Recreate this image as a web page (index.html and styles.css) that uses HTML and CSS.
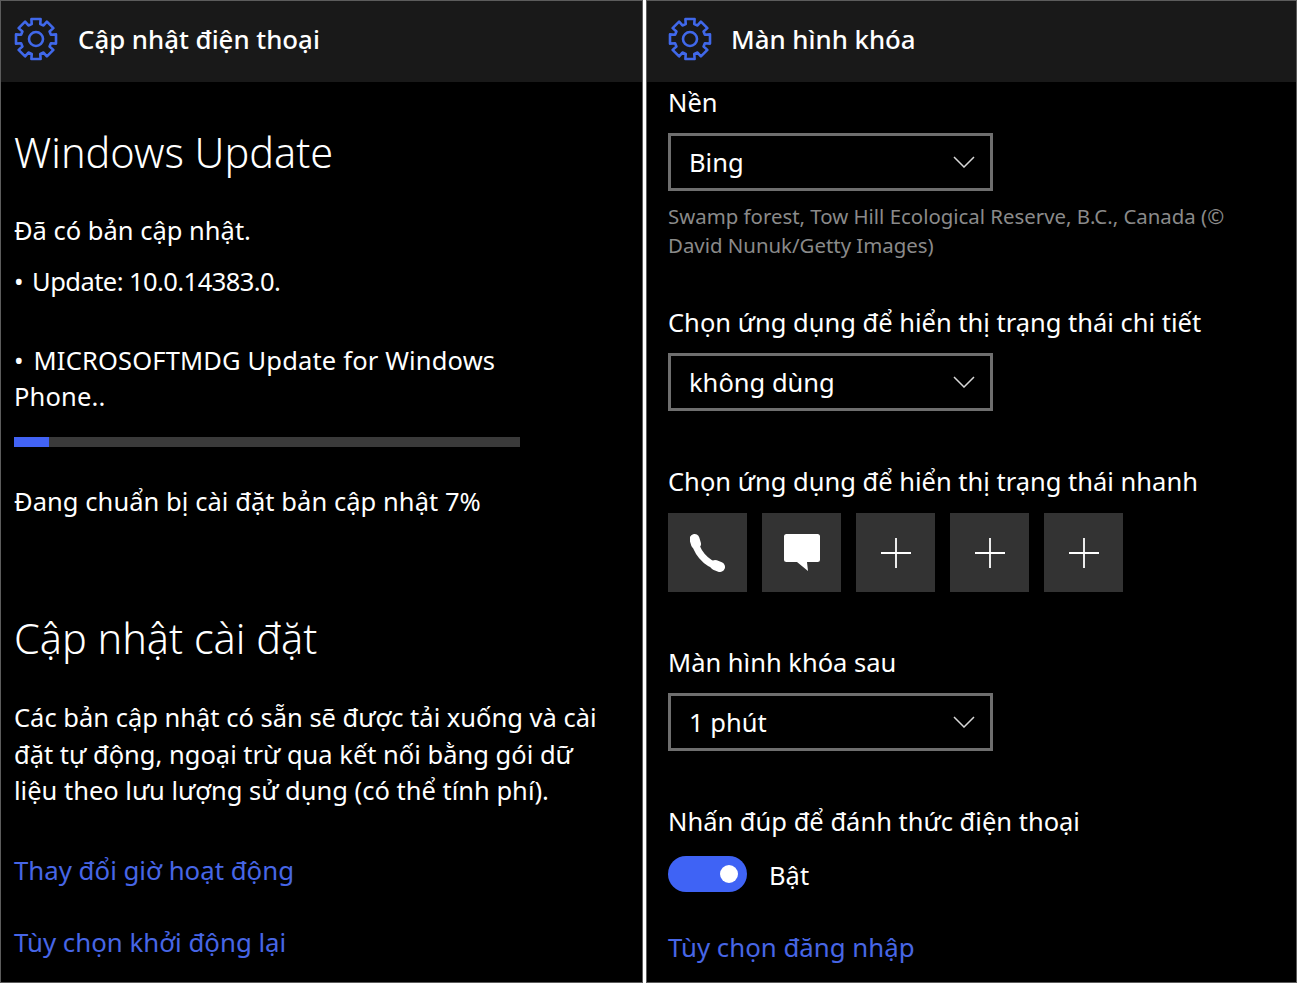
FILE: index.html
```html
<!DOCTYPE html>
<html lang="vi">
<head>
    <meta charset="UTF-8">
    <title>Cập nhật điện thoại - Màn hình khóa</title>
    <link rel="stylesheet" href="styles.css">
</head>
<body>
    <div class="screens">
        <!-- Phone update screen -->
        <section class="screen">
            <header class="screen-header">
                <svg class="gear" viewBox="0 0 44 44"><use href="#gear-icon"></use></svg>
                <h1>Cập nhật điện thoại</h1>
            </header>
            <div class="update-body">
                <h2 class="first-title">Windows Update</h2>
                <p class="status">Đã có bản cập nhật.</p>
                <p class="item"><span class="bullet">•</span> Update: 10.0.14383.0.</p>
                <p class="item-long"><span class="bullet">•</span> MICROSOFTMDG Update for Windows<br>Phone..</p>
                <div class="progress"><div class="progress-fill" style="width: 7%"></div></div>
                <p class="progress-text">Đang chuẩn bị cài đặt bản cập nhật 7%</p>
                <h2 class="second-title">Cập nhật cài đặt</h2>
                <p class="description">Các bản cập nhật có sẵn sẽ được tải xuống và cài<br>đặt tự động, ngoại trừ qua kết nối bằng gói dữ<br>liệu theo lưu lượng sử dụng (có thể tính phí).</p>
                <a class="link link-hours" href="#">Thay đổi giờ hoạt động</a>
                <a class="link link-restart" href="#">Tùy chọn khởi động lại</a>
            </div>
        </section>

        <!-- Lock screen settings -->
        <section class="screen screen-lock">
            <header class="screen-header">
                <svg class="gear" viewBox="0 0 44 44"><use href="#gear-icon"></use></svg>
                <h1>Màn hình khóa</h1>
            </header>
            <div class="lock-body">
                <label class="field-label">Nền</label>
                <div class="select"><span>Bing</span><svg class="chevron" viewBox="0 0 22 12"><path d="M1 1l10 10L21 1"/></svg></div>
                <p class="photo-credit">Swamp forest, Tow Hill Ecological Reserve, B.C., Canada (©<br>David Nunuk/Getty Images)</p>
                <label class="field-label label-detail">Chọn ứng dụng để hiển thị trạng thái chi tiết</label>
                <div class="select"><span>không dùng</span><svg class="chevron" viewBox="0 0 22 12"><path d="M1 1l10 10L21 1"/></svg></div>
                <label class="field-label label-quick">Chọn ứng dụng để hiển thị trạng thái nhanh</label>
                <div class="quick-apps">
                    <div class="quick-app">
                        <svg viewBox="0 0 36 38">
                            <path class="handset" d="M5 5c0 11 10 25 25 28"/>
                            <path class="handset-end" d="M4.500 5l1.500 5M25 31l5 2"/>
                        </svg>
                    </div>
                    <div class="quick-app">
                        <svg viewBox="0 0 36 38"><path class="solid" d="M2.500 0h31a2.500 2.500 0 0 1 2.500 2.500v23a2.500 2.500 0 0 1-2.500 2.500H23l1 9-11-9H2.500a2.500 2.500 0 0 1-2.500-2.500v-23A2.500 2.500 0 0 1 2.500 0z"/></svg>
                    </div>
                    <div class="quick-app"><svg viewBox="0 0 30 30"><path class="plus" d="M15 0v30M0 15h30"/></svg></div>
                    <div class="quick-app"><svg viewBox="0 0 30 30"><path class="plus" d="M15 0v30M0 15h30"/></svg></div>
                    <div class="quick-app"><svg viewBox="0 0 30 30"><path class="plus" d="M15 0v30M0 15h30"/></svg></div>
                </div>
                <label class="field-label label-after">Màn hình khóa sau</label>
                <div class="select"><span>1 phút</span><svg class="chevron" viewBox="0 0 22 12"><path d="M1 1l10 10L21 1"/></svg></div>
                <label class="field-label label-tap">Nhấn đúp để đánh thức điện thoại</label>
                <div class="toggle-row">
                    <div class="toggle"><div class="toggle-knob"></div></div>
                    <span class="toggle-text">Bật</span>
                </div>
                <a class="link link-signin" href="#">Tùy chọn đăng nhập</a>
            </div>
        </section>
    </div>

    <!-- shared gear icon -->
    <svg class="icon-defs" width="0" height="0">
        <symbol id="gear-icon" viewBox="0 0 44 44">
            <path fill="none" stroke="#4068ea" stroke-width="2.600" stroke-linejoin="round" d="M17.730 7.100L17.400 2H26.600L26.270 7.100L29.520 8.440L32.890 4.610L39.390 11.110L35.560 14.480L36.900 17.730L42 17.400V26.600L36.900 26.270L35.560 29.520L39.390 32.890L32.890 39.390L29.520 35.560L26.270 36.900L26.600 42H17.400L17.730 36.900L14.480 35.560L11.110 39.390L4.610 32.890L8.440 29.520L7.100 26.270L2 26.600V17.400L7.100 17.730L8.440 14.480L4.610 11.110L11.110 4.610L14.480 8.440Z"/>
            <circle cx="22" cy="22" r="7" fill="none" stroke="#4068ea" stroke-width="2.600"/>
        </symbol>
    </svg>
</body>
</html>
```

FILE: styles.css
```css
body {
    margin: 0;
    background-color: #fff;
    font-family: "Noto Sans", "Open Sans", sans-serif;
    color: #fff;
}

h1, h2, p {
    margin: 0;
    font-weight: 400;
}

.icon-defs {
    display: block;
}

.screens {
    display: grid;
    grid-template-columns: 643px 651px;
    gap: 3px;
    height: 983px;
    width: 1297px;
    overflow: hidden;
}

.screen {
    background-color: #000;
    min-width: 0;
    overflow: hidden;
    outline: 1px solid #5c5c5c;
    outline-offset: -1px;
}

/* Header bar */
.screen-header {
    display: flex;
    align-items: center;
    height: 82px;
    box-sizing: border-box;
    padding: 0 0 5px 14px;
    background-color: #191919;
}

.screen-lock .screen-header {
    padding-left: 22px;
}

.gear {
    width: 44px;
    height: 44px;
    margin-right: 20px;
}

.screen-lock .gear {
    margin-right: 19px;
}

.screen-header h1 {
    font-size: 25.800px;
    line-height: 34px;
    font-weight: 500;
}

/* Left side */
.update-body {
    padding-left: 14px;
    font-size: 25.500px;
    line-height: 36px;
}

.update-body h2 {
    font-size: 41.400px;
    line-height: 56px;
    font-weight: 300;
}

.first-title {
    padding-top: 42px;
}

.status {
    margin-top: 32px;
}

.bullet {
    margin-right: 3px;
}

.item {
    margin-top: 15px;
    letter-spacing: -0.560px;
}

.item-long {
    margin-top: 43px;
    letter-spacing: 0.160px;
}

.progress {
    width: 506px;
    height: 10px;
    margin-top: 23px;
    background-color: #3a3a3a;
}

.progress-fill {
    height: 100%;
    background-color: #4263f5;
}

.progress-text {
    margin-top: 36px;
    letter-spacing: 0.060px;
}

.update-body .second-title {
    margin-top: 91px;
}

.description {
    margin-top: 33px;
    line-height: 36.500px;
}

.link {
    display: block;
    color: #4766e6;
    text-decoration: none;
    font-size: 25.800px;
    line-height: 36px;
}

.link-hours {
    margin-top: 43px;
}

.link-restart {
    margin-top: 36px;
}

/* Right side */
.lock-body {
    padding: 2px 0 0 22px;
    font-size: 25.500px;
    line-height: 36px;
}

.field-label {
    display: block;
}

.select {
    display: flex;
    align-items: center;
    justify-content: space-between;
    width: 325px;
    height: 58px;
    box-sizing: border-box;
    margin-top: 13px;
    padding: 0 15px 0 18px;
    border: 3px solid #6e6e6e;
}

.chevron {
    width: 22px;
    height: 12px;
    fill: none;
    stroke: #d8d8d8;
    stroke-width: 1.500;
}

.photo-credit {
    margin-top: 11px;
    font-size: 20.400px;
    line-height: 29px;
    color: #8a8a8a;
}

.label-detail {
    margin-top: 44px;
}

.label-quick {
    margin-top: 52px;
}

.quick-apps {
    display: flex;
    gap: 15px;
    margin-top: 14px;
}

.quick-app {
    display: flex;
    align-items: center;
    justify-content: center;
    width: 79px;
    height: 79px;
    background-color: #333;
}

.quick-app svg {
    width: 36px;
    height: 38px;
}

.quick-app .solid {
    fill: #fff;
}

.quick-app .handset {
    fill: none;
    stroke: #fff;
    stroke-width: 7;
    stroke-linecap: round;
}

.quick-app .handset-end {
    fill: none;
    stroke: #fff;
    stroke-width: 10;
    stroke-linecap: round;
}

.quick-app .plus {
    fill: none;
    stroke: #fff;
    stroke-width: 1.800;
}

.quick-app:nth-child(n+3) svg {
    width: 30px;
    height: 30px;
}

.label-after {
    margin-top: 52px;
}

.label-tap {
    margin-top: 52px;
}

.toggle-row {
    display: flex;
    align-items: center;
    gap: 22px;
    margin-top: 16px;
}

.toggle {
    display: flex;
    align-items: center;
    justify-content: flex-end;
    width: 79px;
    height: 36px;
    box-sizing: border-box;
    padding-right: 9px;
    border-radius: 18px;
    background-color: #3f63f5;
}

.toggle-knob {
    width: 18px;
    height: 18px;
    border-radius: 50%;
    background-color: #fff;
}

.toggle-text {
    padding-top: 2px;
}

.link-signin {
    margin-top: 36px;
}
```
